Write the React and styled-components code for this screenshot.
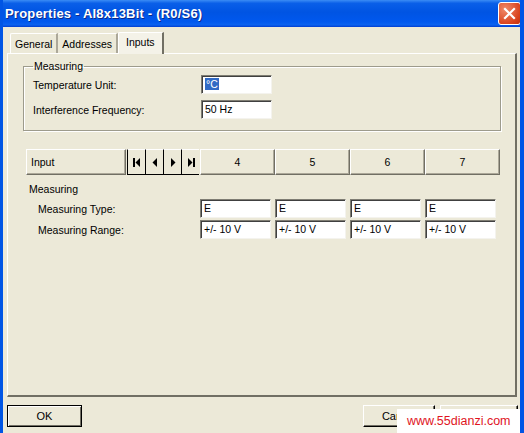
import React from 'react';
import styled, { createGlobalStyle } from 'styled-components';

const Global = createGlobalStyle`
  html, body { margin: 0; padding: 0; background: #ece9d8; }
  body { font-family: "Liberation Sans", Arial, sans-serif; font-size: 10.5px; color: #000; }
`;

const Window = styled.div`
  width: 524px;
  height: 433px;
  display: flex;
  flex-direction: column;
  background: #ece9d8;
  border-left: 3px solid #0055e5;
  border-right: 4px solid #0055e5;
  box-sizing: border-box;
  position: relative;
  overflow: hidden;
`;

const TitleBar = styled.div`
  height: 27px;
  margin: 0 -4px 0 -3px;
  padding: 0 3px 0 5px;
  display: flex;
  align-items: center;
  justify-content: space-between;
  background: linear-gradient(#3b8cf5 0%, #0a5fe8 12%, #0054e3 45%, #0058ee 80%, #0a62f0 92%, #003dd0 100%);
`;

const Title = styled.span`
  color: #fff;
  font-weight: bold;
  font-size: 13px;
  text-shadow: 1px 1px 0 #0b2a8a;
  letter-spacing: 0.2px;
`;

const CloseButton = styled.div`
  width: 21px;
  height: 21px;
  border: 1px solid #fff;
  border-radius: 3px;
  background: radial-gradient(circle at 30% 30%, #f08a6a, #d9431e 70%, #c03010);
  display: flex;
  align-items: center;
  justify-content: center;
`;

const TabRow = styled.div`
  display: flex;
  align-items: flex-end;
  height: 26px;
  padding-left: 7px;
  box-sizing: border-box;
`;

const Tab = styled.div`
  height: ${p => (p.$active ? '22px' : '20px')};
  padding: 0 ${p => (p.$active ? '7px' : '4px')};
  display: flex;
  align-items: ${p => (p.$active ? 'flex-start' : 'center')};
  padding-top: ${p => (p.$active ? '3px' : '0')};
  box-sizing: border-box;
  border-top: 1px solid #fff;
  border-left: ${p => (p.$first || p.$active ? '1px solid #fff' : 'none')};
  border-right: 2px solid ${p => (p.$active ? '#716f64' : '#aca899')};
  border-top-left-radius: 2px;
  background: ${p => (p.$active ? '#f4f2e8' : '#ece9d8')};
  margin-bottom: ${p => (p.$active ? '-1px' : '0')};
  position: relative;
  z-index: ${p => (p.$active ? 1 : 0)};
`;

const Panel = styled.div`
  margin-left: 4px;
  width: 510px;
  height: 344px;
  box-sizing: border-box;
  border-top: 1px solid #fff;
  border-left: 1px solid #fff;
  border-right: 2px solid #716f64;
  border-bottom: 2px solid #716f64;
  padding: 6px 0 0 15px;
`;

const GroupBox = styled.fieldset`
  margin: 0;
  width: 478px;
  height: 71px;
  box-sizing: border-box;
  border: 1px solid #9d9b8c;
  box-shadow: inset 1px 1px 0 #fff, 1px 1px 0 #fff;
  padding: 3px 0 0 9px;
  display: flex;
  flex-direction: column;
  gap: 6px;
`;

const Legend = styled.legend`
  padding: 0 1px;
  margin-left: 0;
  line-height: 12px;
`;

const FieldRow = styled.div`
  display: flex;
  align-items: center;
  height: 19px;
`;

const FieldLabel = styled.span`
  width: ${p => p.$w || 168}px;
  flex: none;
`;

const TextBox = styled.div`
  width: ${p => p.$w || 71}px;
  height: 19px;
  box-sizing: border-box;
  background: #fff;
  border-top: 1px solid #7f7d73;
  border-left: 1px solid #7f7d73;
  border-right: 1px solid #f4f3ee;
  border-bottom: 1px solid #f4f3ee;
  box-shadow: inset 1px 1px 0 #404040;
  padding: 2px 0 0 3px;
  line-height: 13px;
  white-space: nowrap;
`;

const Selected = styled.span`
  background: #316ac5;
  color: #fff;
  padding: 0 1px;
`;

const HeaderRow = styled.div`
  display: flex;
  margin: 18px 0 0 3px;
  height: 26px;
`;

const HeadButton = styled.div`
  width: ${p => p.$w}px;
  height: 26px;
  box-sizing: border-box;
  border-top: 1px solid #fff;
  border-left: 1px solid #fff;
  border-right: 1px solid #716f64;
  border-bottom: 1px solid #716f64;
  box-shadow: inset -1px -1px 0 #aca899;
  background: #ece9d8;
  display: flex;
  align-items: center;
  justify-content: ${p => (p.$left ? 'flex-start' : 'center')};
  padding-left: ${p => (p.$left ? '4px' : '0')};
`;

const NavGroup = styled.div`
  display: flex;
  margin: 0 1px;
  height: 26px;
`;

const NavButton = styled.div`
  width: 18px;
  height: 26px;
  box-sizing: border-box;
  border-left: 1px solid #000;
  border-bottom: 1px solid #000;
  border-top: 1px solid #fff;
  background: #ece9d8;
  display: flex;
  align-items: center;
  justify-content: center;
`;

const SubTitle = styled.div`
  margin: 8px 0 0 6px;
  line-height: 12px;
`;

const DataGrid = styled.div`
  display: grid;
  grid-template-columns: 158px repeat(4, 71px);
  column-gap: 4px;
  row-gap: 2px;
  margin: 4px 0 0 15px;
  align-items: center;
`;

const ButtonRow = styled.div`
  display: flex;
  align-items: center;
  justify-content: space-between;
  padding: 8px 2px 0 4px;
`;

const ButtonGroup = styled.div`
  display: flex;
  gap: 5px;
`;

const DialogButton = styled.div`
  width: ${p => p.$w}px;
  height: 22px;
  box-sizing: border-box;
  border: 1px solid ${p => (p.$default ? '#000' : '#fff')};
  border-right-color: #000;
  border-bottom-color: #000;
  box-shadow: ${p => (p.$default ? 'inset 1px 1px 0 #fff, inset -1px -1px 0 #716f64' : 'inset -1px -1px 0 #716f64')};
  background: #ece9d8;
  display: flex;
  align-items: center;
  justify-content: center;
  font-size: 11px;
`;

const Watermark = styled.div`
  position: absolute;
  left: 394px;
  top: 409px;
  width: 123px;
  height: 24px;
  background: #fff;
  color: #e0141e;
  font-family: "Liberation Sans", Arial, sans-serif;
  font-size: 12.5px;
  display: flex;
  align-items: center;
  padding-left: 10px;
  box-sizing: border-box;
  white-space: nowrap;
`;

const Tri = ({ dir, bar }) => (
  <svg width="10" height="11" viewBox="0 0 10 11">
    {dir === 'left' ? (
      <>
        {bar && <rect x="1" y="1" width="2" height="9" fill="#000" />}
        <polygon points={bar ? '8,1 8,10 3.5,5.5' : '7,1 7,10 2.5,5.5'} fill="#000" />
      </>
    ) : (
      <>
        <polygon points={bar ? '2,1 2,10 6.5,5.5' : '3,1 3,10 7.5,5.5'} fill="#000" />
        {bar && <rect x="7" y="1" width="2" height="9" fill="#000" />}
      </>
    )}
  </svg>
);

const channels = ['4', '5', '6', '7'];

export default function App() {
  return (
    <Window>
      <Global />
      <TitleBar>
        <Title>Properties - AI8x13Bit - (R0/S6)</Title>
        <CloseButton>
          <svg width="13" height="13" viewBox="0 0 13 13">
            <path d="M2 2 L11 11 M11 2 L2 11" stroke="#fff" strokeWidth="2.2" strokeLinecap="square" />
          </svg>
        </CloseButton>
      </TitleBar>

      <TabRow>
        <Tab $first>General</Tab>
        <Tab>Addresses</Tab>
        <Tab $active>Inputs</Tab>
      </TabRow>

      <Panel>
        <GroupBox>
          <Legend>Measuring</Legend>
          <FieldRow>
            <FieldLabel>Temperature Unit:</FieldLabel>
            <TextBox><Selected>°C</Selected></TextBox>
          </FieldRow>
          <FieldRow>
            <FieldLabel>Interference Frequency:</FieldLabel>
            <TextBox>50 Hz</TextBox>
          </FieldRow>
        </GroupBox>

        <HeaderRow>
          <HeadButton $w={100} $left>Input</HeadButton>
          <NavGroup>
            <NavButton><Tri dir="left" bar /></NavButton>
            <NavButton><Tri dir="left" /></NavButton>
            <NavButton><Tri dir="right" /></NavButton>
            <NavButton><Tri dir="right" bar /></NavButton>
          </NavGroup>
          {channels.map(c => (
            <HeadButton key={c} $w={75}>{c}</HeadButton>
          ))}
        </HeaderRow>

        <SubTitle>Measuring</SubTitle>
        <DataGrid>
          <span>Measuring Type:</span>
          {channels.map(c => <TextBox key={c}>E</TextBox>)}
          <span>Measuring Range:</span>
          {channels.map(c => <TextBox key={c}>+/- 10 V</TextBox>)}
        </DataGrid>
      </Panel>

      <ButtonRow>
        <DialogButton $w={75} $default>OK</DialogButton>
        <ButtonGroup>
          <DialogButton $w={72}>Cancel</DialogButton>
          <DialogButton $w={78} />
        </ButtonGroup>
      </ButtonRow>

      <Watermark>www.55dianzi.com</Watermark>
    </Window>
  );
}
